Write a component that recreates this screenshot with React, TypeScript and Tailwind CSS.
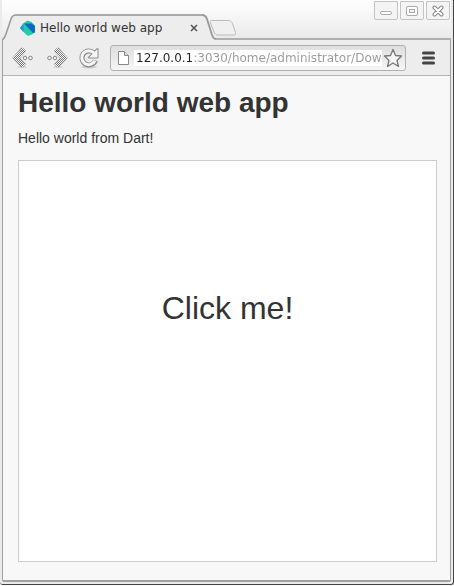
import React from "react";

function DartLogo() {
  return (
    <svg width="16" height="16" viewBox="0 0 16 16" aria-hidden="true">
      <path d="M3 3.500 7.500.5l4 1.500L15 5.500V12l-3 2.500L8 16l-4-3.500L0 8z" fill="#25cba8" />
      <path d="M0 8 3.500 4v8z" fill="#2590d6" />
      <path d="M4 3.500h7.500L15 6v6.500l-2 .5z" fill="#0f68c4" />
    </svg>
  );
}

function ChevronDots({ flip = false }: { flip?: boolean }) {
  return (
    <svg width="22" height="22" viewBox="0 0 22 22" className={flip ? "-scale-x-100" : ""} aria-hidden="true">
      <defs>
        <pattern id="dither" width="2" height="2" patternUnits="userSpaceOnUse">
          <rect width="2" height="2" fill="#fafafa" />
          <rect width="1" height="1" fill="#777" />
          <rect x="1" y="1" width="1" height="1" fill="#777" />
        </pattern>
      </defs>
      <ellipse cx="10" cy="20" rx="5" ry="1" fill="#d2d2d2" />
      <path d="M9 1h2l3 3-6 7 6 6-3 3H9L.5 11z" fill="url(#dither)" stroke="#aaa" strokeWidth=".5" />
      <circle cx="13" cy="11" r="1.800" fill="#eee" stroke="#888" />
      <circle cx="18.500" cy="11" r="1.800" fill="#eee" stroke="#888" />
    </svg>
  );
}

function ReloadIcon() {
  return (
    <svg width="22" height="22" viewBox="0 0 22 22" aria-hidden="true">
      <ellipse cx="11" cy="20" rx="8" ry="1.500" fill="#d0d0d0" />
      <g fill="none" stroke="#8c8c8c">
        <path d="M17.500 13.500A7 7 0 1 1 16 6" strokeWidth="5" />
        <path d="M19.500 2v8.500H11z" strokeWidth="2" strokeLinejoin="round" />
      </g>
      <path d="M17 13.800A7 7 0 1 1 16 6" fill="none" stroke="#f5f5f5" strokeWidth="3" />
      <path d="M19.500 2v8.500H11z" fill="#f5f5f5" />
    </svg>
  );
}

function TitleBar() {
  const control =
    "flex h-[19px] w-6 items-center justify-center rounded-b-[2px] border border-[#c4c4c4] bg-[#f4f4f4]";
  return (
    <header className="flex h-10 items-end justify-between bg-linear-to-b from-[#fdfdfd] from-10% to-[#e9e9e9]">
      <div className="flex h-[26px] min-w-0 flex-1 items-stretch">
        <svg width="14" height="26" viewBox="0 0 14 26" className="shrink-0" aria-hidden="true">
          <path d="M0 26c2-1 3-3 4-6l5-15C10 2 11 1 14 1v25z" fill="#ededed" />
          <path d="M0 26c2-1 3-3 4-6l5-15C10 2 11 1 14 1" fill="none" stroke="#999" strokeWidth="1.500" />
        </svg>
        <div className="flex w-[186px] items-center border-t-2 border-[#a8a8a8] bg-[#ededed] pl-1">
          <DartLogo />
          <span className="ml-1 flex-1 whitespace-nowrap text-[12px] leading-4 text-[#333]">Hello world web app</span>
          <button aria-label="Close tab" className="mr-[2px] flex size-3 items-center justify-center">
            <svg width="8" height="8" viewBox="0 0 8 8" aria-hidden="true">
              <path d="m1 1 6 6m0-6L1 7" stroke="#555" strokeWidth="1.600" />
            </svg>
          </button>
        </div>
        <svg width="14" height="26" viewBox="0 0 14 26" className="shrink-0" aria-hidden="true">
          <path d="M0 1c3 0 4 1 5 4l5 16c1 3 2 4 4 4v1H0z" fill="#ededed" />
          <path d="M0 1c3 0 4 1 5 4l5 16c1 3 2 4 4 4" fill="none" stroke="#999" strokeWidth="1.800" />
        </svg>
        <div className="flex-1 border-b-2 border-[#b0b0b0]">
          <button aria-label="New tab" className="-ml-2 mt-[5px] block">
            <svg width="30" height="18" viewBox="0 0 30 18" aria-hidden="true">
              <path d="M3.500 1.500h17c2 0 3 1 4 3l3 9c.5 2 0 2.500-2 2.500H10c-2 0-3-1-4-3L2.500 4c-.5-2 0-2.500 1-2.500z" fill="#f0f0f0" stroke="#bbb" />
            </svg>
          </button>
        </div>
      </div>
      <div className="flex h-10 items-start gap-[2px] border-b-2 border-[#b0b0b0] pr-px pt-px">
        <button aria-label="Minimize" className={control}>
          <svg width="12" height="12" viewBox="0 0 12 12" aria-hidden="true">
            <rect x=".5" y="6.500" width="11" height="3" rx="1.500" fill="#fff" stroke="#aaa" />
          </svg>
        </button>
        <button aria-label="Maximize" className={control}>
          <svg width="12" height="12" viewBox="0 0 12 12" aria-hidden="true">
            <rect x=".5" y="1.500" width="11" height="9" rx="1.500" fill="#fff" stroke="#aaa" />
            <rect x="3.500" y="4.500" width="5" height="3" fill="#f4f4f4" stroke="#aaa" />
          </svg>
        </button>
        <button aria-label="Close window" className={control + " border-[#999]"}>
          <svg width="12" height="12" viewBox="0 0 12 12" aria-hidden="true">
            <path d="m2.500 2.500 7 7m0-7-7 7" stroke="#888" strokeWidth="4" strokeLinecap="round" />
            <path d="m2.500 2.500 7 7m0-7-7 7" stroke="#fff" strokeWidth="2" strokeLinecap="round" />
          </svg>
        </button>
      </div>
    </header>
  );
}

function Toolbar() {
  return (
    <nav className="flex h-9 items-center border-b border-[#b4b4b4] bg-[#ededed] pl-[9px] pr-[15px]">
      <button aria-label="Back"><ChevronDots /></button>
      <button aria-label="Forward" className="ml-3"><ChevronDots flip /></button>
      <button aria-label="Reload" className="ml-[10px]"><ReloadIcon /></button>
      <div className="ml-[10px] flex h-[26px] min-w-0 flex-1 items-center rounded-[3px] border border-[#b0b0b0] bg-linear-to-b from-[#dedede] to-[#f6f6f6] pl-[6px] pr-[2px]">
        <svg width="13" height="16" viewBox="0 0 13 16" className="shrink-0" aria-hidden="true">
          <path d="M1.500 1.500h6l4 4v9h-10z" fill="#fff" stroke="#888" />
          <path d="M7.500 1.500v4h4" fill="#ddd" stroke="#888" />
        </svg>
        <div className="ml-1 flex min-w-0 flex-1 bg-white">
          <input
            aria-label="Address"
            defaultValue="127.0.0.1:3030/home/administrator/Downloads"
            className="h-4 w-full min-w-0 bg-linear-to-r from-[#222] from-[59px] to-[#999] to-[59px] bg-clip-text pl-[2px] text-[12px] leading-4 text-transparent outline-none"
          />
        </div>
        <button aria-label="Bookmark this page" className="ml-px shrink-0">
          <svg width="20" height="20" viewBox="0 0 20 20" aria-hidden="true">
            <path d="m10 1.500 2.500 6 6 .5-4.500 4.500 1.500 6L10 15l-5.500 3.500 1.500-6L1.500 8l6-.5z" fill="#f7f7f7" stroke="#777" strokeWidth="1.300" strokeLinejoin="round" />
          </svg>
        </button>
      </div>
      <button aria-label="Menu" className="ml-4">
        <svg width="13" height="14" viewBox="0 0 13 14" aria-hidden="true">
          <path d="M1.500 2h10m-10 5h10m-10 5h10" stroke="#444" strokeWidth="3" strokeLinecap="round" />
        </svg>
      </button>
    </nav>
  );
}

export default function App() {
  return (
    <div className="min-h-screen bg-white pb-px font-['DejaVu_Sans',sans-serif]">
      <div className="flex min-h-[calc(100vh-1px)] flex-col rounded-b-[3px] border-b border-r border-[#444] bg-[#ebebeb] pb-[2px] pl-[2px] pr-[2px]">
        <TitleBar />
        <div className="flex flex-1 flex-col rounded-b-[2px] border-x border-b-2 border-[#a0a0a0] bg-[#f8f8f8]">
          <Toolbar />
          <main className="pb-[18px] pl-[15px] pr-[13px] pt-[11px] font-['Liberation_Sans',sans-serif] text-[#333]">
            <h1 className="text-[28px] font-bold leading-8">Hello world web app</h1>
            <p className="mt-[11px] text-[14px] leading-4">Hello world from Dart!</p>
            <section className="mt-[14px] h-[402px] border border-[#ccc] bg-white pt-[129px] text-center">
              <button className="text-[32px] leading-9">Click me!</button>
            </section>
          </main>
        </div>
      </div>
    </div>
  );
}
